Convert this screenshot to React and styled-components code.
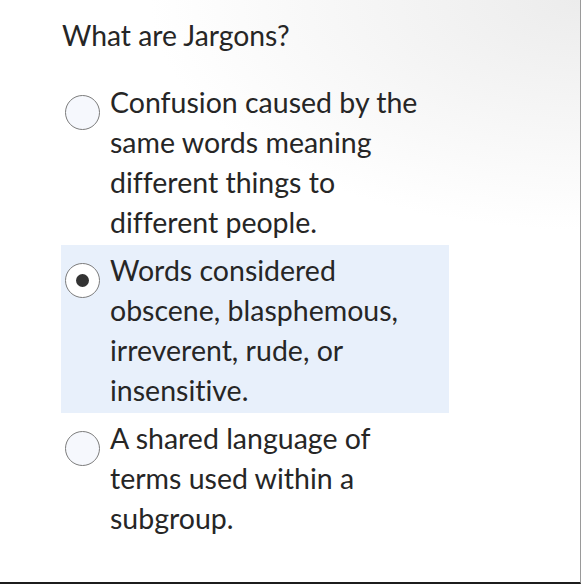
import React, { useState } from 'react';
import styled, { createGlobalStyle } from 'styled-components';

const GlobalStyle = createGlobalStyle`
    html, body {
        margin: 0;
        padding: 0;
        background: #fff;
    }
    * {
        box-sizing: border-box;
    }
`

const options = [
    'Confusion caused by the same words meaning different things to different people.',
    'Words considered obscene, blasphemous, irreverent, rude, or insensitive.',
    'A shared language of terms used within a subgroup.',
];

const App = () => {
    const [selected, setSelected] = useState(1);

    return (
        <>
            <GlobalStyle />
            <Page>
                <Question>What are Jargons?</Question>
                <OptionList>
                    {options.map((text, i) => (
                        <Option key={i} $active={selected === i} onClick={() => setSelected(i)}>
                            <Radio $checked={selected === i} />
                            <OptionText>{text}</OptionText>
                        </Option>
                    ))}
                </OptionList>
            </Page>
        </>
    )
}

export default App;


const Page = styled.div`
    width: 581px;
    height: 584px;
    overflow: hidden;
    padding: 15px 0 0 61px;
    border-right: 1px solid #9a9a9a;
    border-bottom: 2px solid #1c1c1c;
    background:
        radial-gradient(ellipse 430px 230px at 100% 0, #ececec 0%, rgba(255, 255, 255, 0) 100%),
        #fff;
    font-family: Lato, "Noto Sans", sans-serif;
    font-variant-ligatures: none;
    color: #262626;
`

const Question = styled.h2`
    margin: 0 0 22px 1px;
    font-size: 28.3px;
    font-weight: 400;
    line-height: 40px;
`

const OptionList = styled.div`
    width: 388px;
    display: flex;
    flex-direction: column;
`

const Option = styled.label`
    display: grid;
    grid-template-columns: 35px 1fr;
    column-gap: 10px;
    align-items: start;
    padding: 5px 0 3px 4px;
    background: ${({ $active }) => ($active ? '#e8f0fb' : 'transparent')};
    cursor: pointer;
`

const Radio = styled.span`
    width: 35px;
    height: 35px;
    margin-top: 13px;
    border-radius: 50%;
    border: 1.5px solid #7c7c7c;
    background: ${({ $checked }) => ($checked ? '#fff' : '#f6f8fd')};
    display: flex;
    align-items: center;
    justify-content: center;

    &::after {
        content: '';
        width: 13px;
        height: 13px;
        border-radius: 50%;
        background: #333;
        display: ${({ $checked }) => ($checked ? 'block' : 'none')};
    }
`

const OptionText = styled.span`
    font-size: 28.5px;
    line-height: 40px;
    padding-right: 8px;
`
